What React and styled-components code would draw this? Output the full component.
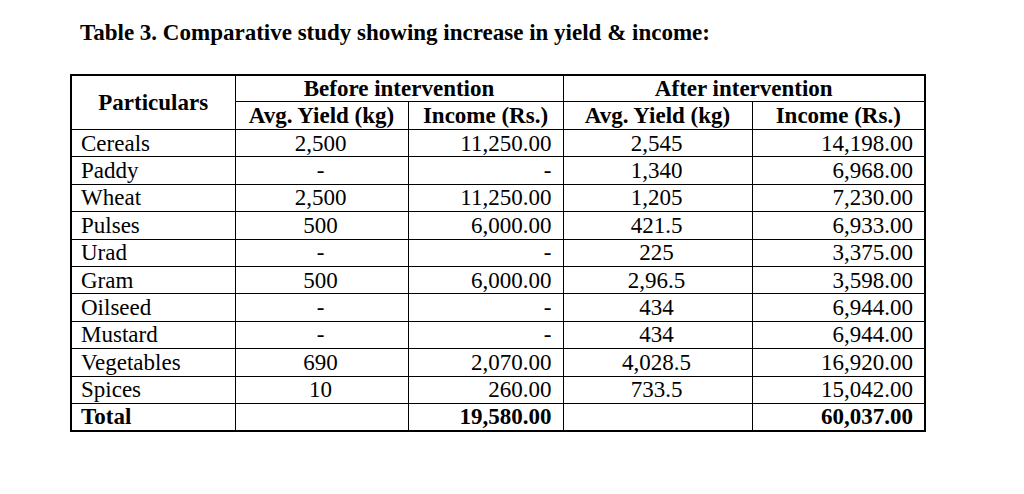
import React from 'react'
import styled, { createGlobalStyle } from 'styled-components'

const GlobalStyle = createGlobalStyle`
    html, body {
        margin: 0;
        padding: 0;
        background: #fff;
    }
    body {
        font-family: "Liberation Serif", "Times New Roman", serif;
        color: #000;
    }
`

const Page = styled.div`
    width: 1024px;
    height: 494px;
    padding: 20px 0 0 70px;
    box-sizing: border-box;
`

const Caption = styled.h3`
    margin: 0 0 28px 10px;
    font-size: 23px;
    font-weight: bold;
    line-height: 26px;
`

const Table = styled.table`
    border-collapse: collapse;
    border: 2px solid #000;
    font-size: 23px;
    line-height: 25px;
    table-layout: fixed;
    width: 854px;
`

const Row = styled.tr`
    height: 27.4px;
`

const Cell = styled.td`
    border: 1px solid #000;
    padding: 0 11px 0 9px;
    text-align: ${p => p.$align || 'left'};
    font-weight: ${p => (p.$bold ? 'bold' : 'normal')};
    white-space: nowrap;
    vertical-align: middle;
`

const Head = styled.th`
    border: 1px solid #000;
    padding: 0 4px;
    height: ${p => p.$h || 24}px;
    text-align: center;
    font-weight: bold;
    white-space: nowrap;
    vertical-align: middle;
`

const rows = [
    ['Cereals', '2,500', '11,250.00', '2,545', '14,198.00'],
    ['Paddy', '-', '-', '1,340', '6,968.00'],
    ['Wheat', '2,500', '11,250.00', '1,205', '7,230.00'],
    ['Pulses', '500', '6,000.00', '421.5', '6,933.00'],
    ['Urad', '-', '-', '225', '3,375.00'],
    ['Gram', '500', '6,000.00', '2,96.5', '3,598.00'],
    ['Oilseed', '-', '-', '434', '6,944.00'],
    ['Mustard', '-', '-', '434', '6,944.00'],
    ['Vegetables', '690', '2,070.00', '4,028.5', '16,920.00'],
    ['Spices', '10', '260.00', '733.5', '15,042.00'],
]

export default function App() {
    return (
        <Page>
            <GlobalStyle />
            <Caption>Table 3. Comparative study showing increase in yield &amp; income:</Caption>
            <Table>
                <colgroup>
                    <col style={{ width: 164 }} />
                    <col style={{ width: 173 }} />
                    <col style={{ width: 155 }} />
                    <col style={{ width: 189 }} />
                    <col style={{ width: 173 }} />
                </colgroup>
                <thead>
                    <tr>
                        <Head rowSpan={2}>Particulars</Head>
                        <Head colSpan={2} $h={23}>Before intervention</Head>
                        <Head colSpan={2} $h={23}>After intervention</Head>
                    </tr>
                    <tr>
                        <Head $h={27}>Avg. Yield (kg)</Head>
                        <Head $h={27}>Income (Rs.)</Head>
                        <Head $h={27}>Avg. Yield (kg)</Head>
                        <Head $h={27}>Income (Rs.)</Head>
                    </tr>
                </thead>
                <tbody>
                    {rows.map(r => (
                        <Row key={r[0]}>
                            <Cell>{r[0]}</Cell>
                            <Cell $align="center">{r[1]}</Cell>
                            <Cell $align="right">{r[2]}</Cell>
                            <Cell $align="center">{r[3]}</Cell>
                            <Cell $align="right">{r[4]}</Cell>
                        </Row>
                    ))}
                    <Row>
                        <Cell $bold>Total</Cell>
                        <Cell />
                        <Cell $align="right" $bold>19,580.00</Cell>
                        <Cell />
                        <Cell $align="right" $bold>60,037.00</Cell>
                    </Row>
                </tbody>
            </Table>
        </Page>
    )
}
